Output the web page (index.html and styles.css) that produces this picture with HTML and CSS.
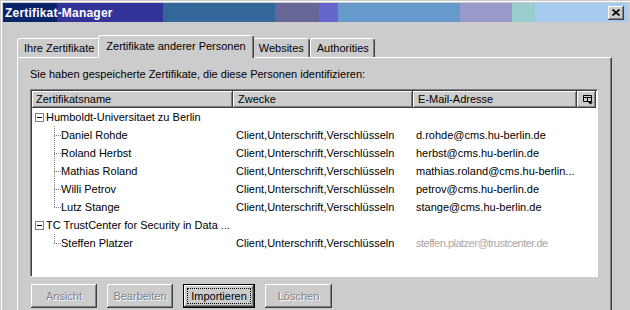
FILE: index.html
```html
<!DOCTYPE html>
<html lang="de">
<head>
  <meta charset="UTF-8">
  <title>Zertifikat-Manager</title>
  <link rel="stylesheet" href="styles.css">
</head>
<body>
  <div class="fenster">

    <!-- Titelleiste -->
    <div class="titelleiste">
      <span class="titel">Zertifikat-Manager</span>
      <button class="schliessen" aria-label="Schließen">
        <svg width="8" height="7" viewBox="0 0 8 7"><path d="M0.5 0.5l7 6M7.5 0.5l-7 6" stroke="#000" stroke-width="1.6" fill="none"/></svg>
      </button>
    </div>

    <!-- Reiter -->
    <div class="reiter">
      <div class="reiter-tab">Ihre Zertifikate</div>
      <div class="reiter-tab aktiv">Zertifikate anderer Personen</div>
      <div class="reiter-tab">Websites</div>
      <div class="reiter-tab">Authorities</div>
    </div>

    <div class="panel">
      <p class="hinweis">Sie haben gespeicherte Zertifikate, die diese Personen identifizieren:</p>

      <!-- Liste -->
      <div class="liste">
        <div class="kopf">
          <div class="spalte c-name">Zertifikatsname</div>
          <div class="spalte c-zweck">Zwecke</div>
          <div class="spalte c-mail">E-Mail-Adresse</div>
          <div class="spalte c-wahl">
            <svg width="11" height="10" viewBox="0 0 11 10"><path d="M0.5 0.5h8v6h-8z M0.5 2.5h8 M4.5 2.5v4" fill="none" stroke="#000"/><path d="M5 7h5l-2.5 2.5z" fill="#000"/></svg>
          </div>
        </div>

        <div class="zeile gruppe"><span class="c-name"><i class="knoten"></i><span class="text">Humboldt-Universitaet zu Berlin</span></span></div>
        <div class="zeile"><span class="c-name"><i class="ast"></i>Daniel Rohde</span><span class="c-zweck">Client,Unterschrift,Verschlüsseln</span><span class="c-mail">d.rohde@cms.hu-berlin.de</span></div>
        <div class="zeile"><span class="c-name"><i class="ast"></i>Roland Herbst</span><span class="c-zweck">Client,Unterschrift,Verschlüsseln</span><span class="c-mail">herbst@cms.hu-berlin.de</span></div>
        <div class="zeile"><span class="c-name"><i class="ast"></i>Mathias Roland</span><span class="c-zweck">Client,Unterschrift,Verschlüsseln</span><span class="c-mail">mathias.roland@cms.hu-berlin...</span></div>
        <div class="zeile"><span class="c-name"><i class="ast"></i>Willi Petrov</span><span class="c-zweck">Client,Unterschrift,Verschlüsseln</span><span class="c-mail">petrov@cms.hu-berlin.de</span></div>
        <div class="zeile"><span class="c-name"><i class="ast ende"></i>Lutz Stange</span><span class="c-zweck">Client,Unterschrift,Verschlüsseln</span><span class="c-mail">stange@cms.hu-berlin.de</span></div>
        <div class="zeile gruppe"><span class="c-name"><i class="knoten"></i><span class="text">TC TrustCenter for Security in Data ...</span></span></div>
        <div class="zeile"><span class="c-name"><i class="ast ende"></i>Steffen Platzer</span><span class="c-zweck">Client,Unterschrift,Verschlüsseln</span><span class="c-mail verdeckt">steffen.platzer@trustcenter.de</span></div>
      </div>

      <!-- Knöpfe -->
      <div class="knoepfe">
        <button class="knopf k-ansicht" disabled>Ansicht</button>
        <button class="knopf k-bearbeiten" disabled>Bearbeiten</button>
        <button class="knopf k-importieren standard">Importieren</button>
        <button class="knopf k-loeschen" disabled>Löschen</button>
      </div>
    </div>
  </div>
</body>
</html>
```

FILE: styles.css
```css
body {
  margin: 0;
  background: #cccccc;
  font-family: "Liberation Sans", Arial, sans-serif;
  font-size: 11px;
  color: #000;
  overflow: hidden;
}

.fenster {
  height: 310px;
  padding: 3px 2px 0 3px;
  box-sizing: border-box;
  box-shadow: inset 1px 1px 0 #cccccc, inset 2px 2px 0 #ffffff;
}

/* Titelleiste */
.titelleiste {
  height: 19px;
  display: flex;
  align-items: center;
  justify-content: space-between;
  padding: 0 4px 0 2px;
  background: linear-gradient(to right,
    #0a246a 0 54px, #333399 54px 160px, #336699 160px 272px,
    #666699 272px 316px, #6666cc 316px 335px, #6699cc 335px 457px,
    #9999cc 457px 509px, #99cccc 509px 532px, #a6caf0 532px);
}

.titel {
  color: #fff;
  font-weight: bold;
  font-size: 12px;
  letter-spacing: 0.2px;
}

.schliessen {
  width: 16px;
  height: 14px;
  padding: 0;
  border: 0;
  background: #cccccc;
  display: flex;
  align-items: center;
  justify-content: center;
  box-shadow: inset -1px -1px #404040, inset 1px 1px #fff, inset -2px -2px #808080;
}

/* Reiter */
.reiter {
  display: flex;
  align-items: flex-end;
  height: 22px;
  margin: 13px 0 0 14px;
}

.reiter-tab {
  height: 19px;
  box-sizing: border-box;
  padding: 0 5px 0 6px;
  line-height: 18px;
  border: 1px solid #fff;
  border-bottom: 0;
  border-right-color: #404040;
  border-radius: 3px 3px 0 0;
  box-shadow: inset -1px 0 #808080;
  background: #cccccc;
  white-space: nowrap;
}

.reiter-tab.aktiv {
  height: 23px;
  margin: 0 -2px -1px;
  padding: 0 7px;
  line-height: 20px;
  position: relative;
  z-index: 1;
}

.panel {
  width: 595px;
  height: 262px;
  margin-left: 14px;
  box-sizing: border-box;
  padding: 10px 0 0 12px;
  border: 1px solid #fff;
  border-right-color: #404040;
  border-bottom-color: #404040;
  box-shadow: inset -1px -1px #808080;
}

.hinweis {
  margin: 0;
  line-height: 13px;
}

/* Liste */
.liste {
  width: 568px;
  height: 188px;
  margin-top: 8px;
  box-sizing: border-box;
  padding: 1px;
  border: 1px solid;
  border-color: #808080 #fff #fff #808080;
  box-shadow: inset 1px 1px #404040;
  background: #fff;
}

.kopf {
  display: flex;
  height: 17px;
}

.spalte {
  box-sizing: border-box;
  padding-left: 4px;
  line-height: 16px;
  background: #cccccc;
  box-shadow: inset -1px -1px #404040, inset 1px 1px #fff, inset -2px -2px #808080;
}

.c-name { width: 201px; }
.c-zweck { width: 180px; }
.c-mail { width: 164px; }

.spalte.c-zweck { padding-left: 5px; }
.spalte.c-mail { padding-left: 5px; }

.c-wahl {
  width: 19px;
  padding: 4px 0 0 6px;
}

.c-wahl svg {
  display: block;
}

.zeile {
  display: flex;
  height: 18px;
  line-height: 18px;
  white-space: nowrap;
}

.zeile .c-name {
  display: flex;
  align-items: center;
  padding-left: 22px;
  box-sizing: border-box;
  overflow: hidden;
}

.zeile.gruppe .c-name {
  width: 300px;
  padding-left: 3px;
}

.zeile .c-zweck,
.zeile .c-mail {
  padding-left: 3px;
  box-sizing: border-box;
  overflow: hidden;
}

.knoten {
  flex: none;
  width: 9px;
  height: 9px;
  box-sizing: border-box;
  margin: 0 2px 0 0;
  border: 1px solid #808080;
  background: #fff linear-gradient(#000, #000) center / 5px 1px no-repeat;
}

.ast {
  flex: none;
  width: 7px;
  height: 18px;
  background:
    repeating-linear-gradient(#808080 0 1px, transparent 1px 2px) 0 0 / 1px 100% no-repeat,
    repeating-linear-gradient(to right, #808080 0 1px, transparent 1px 2px) 0 9px / 7px 1px no-repeat;
}

.ast.ende {
  background:
    repeating-linear-gradient(#808080 0 1px, transparent 1px 2px) 0 0 / 1px 10px no-repeat,
    repeating-linear-gradient(to right, #808080 0 1px, transparent 1px 2px) 0 9px / 7px 1px no-repeat;
}

.verdeckt {
  color: #a8a8a8;
  letter-spacing: -0.5px;
}

/* Knöpfe */
.knoepfe {
  display: flex;
  gap: 10px;
  margin: 7px 0 0 1px;
}

.knopf {
  height: 24px;
  padding: 0;
  border: 0;
  box-sizing: border-box;
  background: #cccccc;
  font: inherit;
  color: #000;
  box-shadow: inset -1px -1px #404040, inset 1px 1px #fff, inset -2px -2px #808080;
}

.knopf:disabled {
  color: #808080;
  text-shadow: 1px 1px #fff;
}

.knopf.standard {
  border: 1px solid #000;
  outline: 1px dotted #000;
  outline-offset: -5px;
}

.k-ansicht { width: 66px; }
.k-bearbeiten { width: 66px; }
.k-importieren { width: 72px; }
.k-loeschen { width: 67px; }
```
